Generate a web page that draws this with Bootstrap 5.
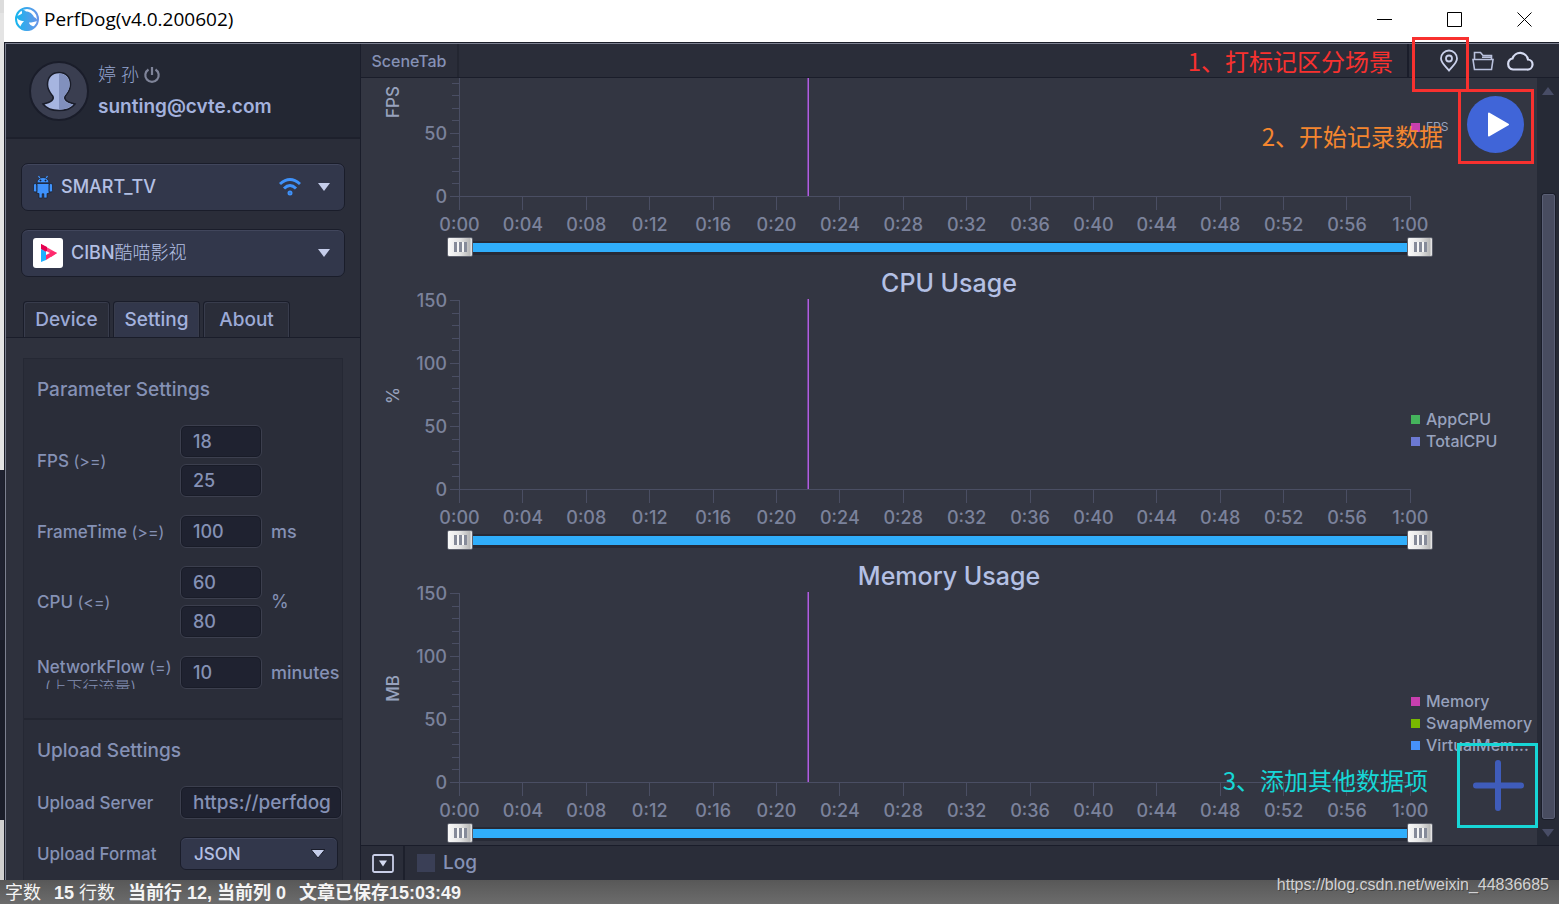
<!DOCTYPE html>
<html lang="zh-CN">
<head>
<meta charset="utf-8">
<meta name="viewport" content="width=device-width, initial-scale=1">
<title>PerfDog(v4.0.200602)</title>
<link href="https://cdn.jsdelivr.net/npm/bootstrap@5.3.0/dist/css/bootstrap.min.css" rel="stylesheet">
<style>
  :root {
    --ink: #1a1d2a;
    --bar: #2a2d39;
    --pane: #2e313d;
    --chart-bg: #333642;
    --raised: #32374b;
    --text: #8591b5;
    --bright: #b4c0e4;
    --axis: #4a4e63;
  }
  body { font-family: Inter, "Noto Sans CJK SC", sans-serif; font-size: 18px; line-height: 24px; font-weight: 500; color: var(--text); background: #666; }
  button { font-weight: inherit; }
  svg { display: block; flex: none; }
  .shrinkable { min-width: 0; min-height: 0; }
  .backdrop-edge { width: 4px; background: linear-gradient(#dcdcdc 0 13px, #e4e4e4 13px 470px, #1f2230 470px 640px, #1a1d29 640px 820px, #d0d0d0 820px); }
  .title-bar { height: 42px; background: #fff; color: #000; font: 400 19px/24px "Open Sans", sans-serif; }
  .title-bar .caption-btn { width: 70px; height: 40px; }
  .plain-btn { background: none; border: 0; padding: 0; color: inherit; display: flex; align-items: center; justify-content: center; }
  .app-frame { border-left: 1px solid #1b1e29; border-top: 1px solid #1b1e29; }
  .app-inner { border-left: 1px solid #7c8090; border-top: 1px solid #7c8090; }

  .side { width: 355px; background: var(--bar); border-right: 1px solid var(--ink); }
  .account { height: 95px; background: #232733; border-bottom: 2px solid #1d202c; padding-left: 22px; }
  .account-name { font-weight: 300; font-size: 18px; color: #94a4cf; }
  .account-mail { font-weight: 600; font-size: 19px; color: #a4b2de; }
  .picker-list { display: grid; gap: 18px; padding: 24px 15px 0; }
  .picker { height: 48px; border: 1px solid var(--ink); border-radius: 7px; background: var(--raised); box-shadow: inset 0 1px #41465c; color: var(--bright); width: 100%; text-align: left; padding: 0 14px 0 11px; }
  .picker .cjk { font-weight: 300; }
  .side-tabs { --bs-nav-tabs-border-width: 0; gap: 3px; padding: 0 17px; border-bottom: 1px solid var(--ink); }
  .side-tabs .nav-link { width: 87px; height: 36px; padding: 0; margin: 0; font-size: 19px; color: #9caad6; border: 1px solid var(--ink); border-bottom: 0; border-radius: 4px 4px 0 0; box-shadow: inset 1px 1px #383c4c, inset -1px 0 #383c4c; }
  .side-tabs .nav-link:hover { color: var(--bright); }
  .side-tabs .nav-link.active { background: var(--raised); color: #a4b2de; border-color: var(--ink); }
  .tab-body { background: var(--pane); min-height: 0; padding: 20px 17px 0; }
  .panel-box { background: var(--bar); border: 1px solid #252834; border-bottom: 0; }
  .set-group { padding: 19px 0 0 13px; }
  .set-group + .set-group { border-top: 2px solid #232631; }
  .set-group:first-child { padding-bottom: 29px; }
  .set-title { font-size: 19px; line-height: 24px; font-weight: 500; margin-bottom: 23px; }
  .set-rows { display: grid; grid-template-columns: 143px 82px 1fr; row-gap: 18px; align-items: center; }
  .set-rows .pair { display: grid; gap: 6px; }
  .set-rows label { font-size: 17px; white-space: nowrap; }
  .set-rows label span { font-size: 16px; font-weight: 400; }
  .set-rows .unit { padding-left: 9px; white-space: nowrap; font-size: 18px; }
  .set-rows .clip-label { height: 33px; line-height: 22px; overflow: hidden; }
  .set-rows .clip-label .sub { display: block; padding-left: 8px; line-height: 18px; font-size: 16px; font-weight: 300; }
  .field { height: 33px; min-width: 0; padding: 0 8px 0 12px; border: 1px solid #3c3f4e; border-radius: 6px; background: #1f2230; color: var(--text); font-size: 18px; font-weight: 500; box-shadow: inset 0 0 0 1px #191c28; }
  .field:focus { background: #1f2230; color: var(--bright); }
  .wide { grid-column: 2 / 4; }
  .server-field { font-size: 19px; padding-right: 0; }
  .format-list { width: 158px; height: 33px; padding: 0 30px 0 13px; border: 1px solid var(--ink); border-radius: 6px; font-size: 17px; font-weight: 500; line-height: 30px; color: var(--bright); background: var(--raised) url("data:image/svg+xml,%3Csvg xmlns='http://www.w3.org/2000/svg' viewBox='0 0 14 9'%3E%3Cpath d='M0 .5h14L7 9z' fill='%23c5cdea' stroke='%231a1d2a'/%3E%3C/svg%3E") no-repeat right 12px center / 14px 9px; box-shadow: inset 0 1px #41465c; }

  .main-pane { min-width: 0; background: var(--chart-bg); }
  .scene-bar { height: 34px; background: var(--bar); border-bottom: 1px solid var(--ink); }
  .scene-tab { width: 98px; font-size: 16px; border-right: 2px solid #232631; }
  .scene-note { padding-right: 14px; padding-top: 1px; }
  .scene-tools { width: 152px; border-left: 2px solid var(--ink); padding-right: 25px; }
  .note { font: 400 24px/32px "Noto Sans CJK SC", sans-serif; white-space: nowrap; }
  .note-red { color: #f8312f; } .note-orange { color: #f5862f; } .note-cyan { color: #17d6d6; }
  .mark-frame { position: absolute; border: 3px solid currentColor; pointer-events: none; }
  .frame-pin { width: 57px; height: 55px; right: 90px; top: -7px; }
  .run-slot { position: absolute; right: 25px; top: 45px; width: 76px; height: 75px; border: 3px solid #f8312f; }
  .run-btn { width: 57px; height: 57px; border-radius: 50%; background: #4065d8; margin: 4px 0 0 6px; }
  .add-slot { position: absolute; right: 21px; bottom: 52px; width: 81px; height: 85px; border: 3px solid #17d6d6; }
  .note-run { position: absolute; right: 116px; top: 76px; }
  .note-add { position: absolute; right: 131px; bottom: 84px; }

  .chart-list { min-height: 0; display: flex; flex-direction: column; justify-content: flex-end; overflow: hidden; }
  .chart-block { height: 293px; flex: none; display: flex; flex-direction: column; }
  .chart-name { height: 41px; padding-top: 6px; font-size: 25px; line-height: 36px; font-weight: 500; color: var(--bright); text-align: center; margin: 0; }
  .y-side { width: 98px; height: 190px; display: grid; grid-template-columns: 64px 34px; }
  .y-title { writing-mode: vertical-rl; transform: rotate(180deg); place-self: center; font-size: 17px; color: #98a2bd; }
  .y-scale { display: flex; flex-direction: column; justify-content: space-between; align-items: flex-end; }
  .y-scale i { display: block; height: 1px; width: 7px; background: var(--axis); position: relative; }
  .y-scale i.major { width: 9px; }
  .y-scale i span { position: absolute; right: 12px; top: -11px; font-style: normal; font-size: 18px; line-height: 24px; color: #7b829b; }
  .plot { height: 190px; border-left: 1px solid var(--axis); border-bottom: 1px solid var(--axis); position: relative; }
  .cursor-line { position: absolute; top: -1px; bottom: 0; width: 2px; margin-left: -2px; background: linear-gradient(90deg, #74429a 50%, #b060dd 50%); }
  .x-scale { display: flex; justify-content: space-between; height: 40px; }
  .x-scale div { width: 1px; display: flex; flex-direction: column; align-items: center; font-size: 18px; line-height: 24px; white-space: nowrap; color: #7b829b; }
  .x-scale div::before { content: ""; width: 1px; height: 13px; margin-bottom: 3px; background: var(--axis); flex: none; }
  .window-range { display: grid; height: 20px; margin: 0 -22px 0 -12px; background: linear-gradient(#272a36, #272a36) 0 4px / 100% 14px no-repeat; background-clip: content-box; padding: 0 12px; }
  .window-range input { grid-area: 1 / 1; appearance: none; background: none; width: auto; margin: 0 -12px; height: 20px; pointer-events: none; min-width: 0; }
  .window-range .lo { background: linear-gradient(#30aefb, #30aefb) 12px 6px / calc(100% - 24px) 9px no-repeat; }
  .window-range input::-webkit-slider-thumb { appearance: none; pointer-events: auto; width: 26px; height: 20px; border: 1px solid #5d606c; border-radius: 2px;
    background: linear-gradient(90deg, #858a99 3px, #f6f6f6 3px 5px, #858a99 5px 8px, #f6f6f6 8px 10px, #858a99 10px 13px) center / 13px 10px no-repeat, linear-gradient(90deg, #fafafa, #e4e4e4 50%, #b9b9b9 90%, #eee); }
  .key-side { width: 126px; padding-top: 8px; display: flex; flex-direction: column; justify-content: center; font-size: 16px; line-height: 22px; color: #98a2bd; white-space: nowrap; }
  .key-side.tight { font-size: 12px; padding: 0 0 12px; font-weight: 400; }
  .key-side div { display: flex; align-items: center; gap: 6px; }
  .key-side b { width: 9px; height: 9px; flex: none; }
  .scroll-rail { width: 22px; background: #262a36; padding: 9px 0 8px; }
  .scroll-rail .grip { width: 13px; margin: 99px 0 10px; border: 1px solid #5a5f75; outline: 1px solid var(--ink); border-radius: 2px; background: #484c60; }
  .log-bar { height: 35px; background: var(--bar); border-top: 1px solid var(--ink); font-size: 19px; }
  .log-toggle { width: 44px; border-right: 2px solid #1d202c; padding-left: 2px; }
  .log-check { appearance: none; width: 18px; height: 18px; margin: 0; background: #3a3f56; }
  .log-check:checked { background: #4065d8; }

  .editor-status { height: 24px; background: linear-gradient(#585858, #6c6c6c); color: #f4f4f4; font: 700 18px/26px "Liberation Sans", "Noto Sans CJK SC", sans-serif; padding-left: 5px; position: relative; display: flex; gap: 13px; }
  .editor-status .thin { font-weight: 400; }
  .page-mark { position: absolute; right: 10px; top: -7px; font: 400 16px/24px "Liberation Sans", sans-serif; color: #d2d2d4; text-decoration: none; text-shadow: 1px 1px #444; }
</style>
</head>
<body class="vh-100 d-flex flex-column overflow-hidden">
<div class="d-flex flex-grow-1 shrinkable">
  <div class="backdrop-edge flex-shrink-0"></div>
  <div class="d-flex flex-column flex-grow-1 shrinkable">
    <header class="title-bar d-flex align-items-center flex-shrink-0 pb-1">
      <svg class="ms-2 me-1" width="28" height="28" viewBox="0 0 28 28"><defs><linearGradient id="lg" x1="0" x2="1"><stop stop-color="#18b5ee"/><stop offset="1" stop-color="#6795e8"/></linearGradient></defs><circle cx="15" cy="14" r="11" fill="#fff" stroke="url(#lg)" stroke-width="2"/><path d="M4 11C5 14 8 16 12 16 9 19 8 22 8 23.500 13 27 19 26 23 22 19 21 17 19 17 17.500 20 17.500 23 17 25.500 15.500 25 14 24 13 22 12 20 8 17 6.500 14 6.500 13 5 11 4.500 9 4.800 10 6 10 7 10 8.500 8 10 6 11 4 11Z" fill="url(#lg)"/></svg>
      <span class="flex-grow-1">PerfDog(v4.0.200602)</span>
      <button class="plain-btn caption-btn" aria-label="Minimize"><svg width="16" height="16" viewBox="0 0 16 16"><path d="M1 8.500h15" stroke="#000"/></svg></button>
      <button class="plain-btn caption-btn" aria-label="Maximize"><svg width="16" height="16" viewBox="0 0 16 16"><path d="M1.500 1.500h14v14h-14z" fill="none" stroke="#000"/></svg></button>
      <button class="plain-btn caption-btn" aria-label="Close"><svg width="16" height="16" viewBox="0 0 16 16"><path d="M1.500 1.500l14 14M15.500 1.500l-14 14" stroke="#000"/></svg></button>
    </header>

    <div class="app-frame d-flex flex-grow-1 shrinkable">
    <div class="app-inner d-flex flex-grow-1 shrinkable">
      <aside class="side d-flex flex-column flex-shrink-0 overflow-hidden">
        <section class="account d-flex align-items-center flex-shrink-0">
          <svg width="62" height="62" viewBox="0 0 62 62"><circle cx="31" cy="31" r="29" fill="#3a3e50" stroke="#1a1d2a" stroke-width="2"/><path d="M31 12.500c-7 0-11.500 4.500-11.500 12 0 6 3.500 9 5.500 12 1 3-1 5.500-10 7.500 3 4 9 6.500 16 6.500s13-2.500 16-6.500c-9-2-11-4.500-10-7.500 2-3 5.500-6 5.500-12 0-7.500-4.500-12-11.500-12z" fill="#a6b5e0" stroke="#1a1d2a" stroke-width="1.500"/><path d="M31 13.500c6 0 10.500 4 10.500 11 0 6-3.500 9-5.500 12-1 3.500 1 6 9 8-3 3-8 5-14 5z" fill="#8190bd"/></svg>
          <div class="ms-2">
            <div class="account-name d-flex align-items-center mb-2">婷 孙
              <button class="plain-btn ms-1" aria-label="Sign out"><svg width="18" height="18" viewBox="0 0 18 18" fill="none" stroke="#7f8499" stroke-width="2.200"><path d="M5.500 3.500a6.700 6.700 0 1 0 7 0M9 1v8"/></svg></button>
            </div>
            <div class="account-mail">sunting@cvte.com</div>
          </div>
        </section>

        <div class="picker-list">
          <button class="picker d-flex align-items-center">
            <svg width="20" height="24" viewBox="0 0 20 24" fill="#3f92fb" stroke="#1a1d2a" stroke-width=".7"><path d="M5.500 1l2 3M14.500 1l-2 3" stroke="#3f92fb" stroke-width="1.300"/><path d="M4 8.500h12v10h-2V23h-3.200v-4.200H9.200V23H6v-4.500H4zM4 7.800a6 5.300 0 0 1 12 0z"/><rect x=".5" y="8.500" width="3.200" height="8.500" rx="1.500"/><rect x="16.300" y="8.500" width="3.200" height="8.500" rx="1.500"/><circle cx="7.500" cy="5.500" r=".6" fill="#1a1d2a"/><circle cx="12.500" cy="5.500" r=".6" fill="#1a1d2a"/></svg>
            <span class="flex-grow-1 ps-2">SMART_TV</span>
            <svg class="me-3" width="24" height="22" viewBox="0 0 24 22" fill="none" stroke="#3f92fb" stroke-width="3"><path d="M2 8q10-9 20 0M6 12.500q6-6 12 0"/><circle cx="12" cy="17" r="1" /></svg>
            <svg width="12" height="8" viewBox="0 0 12 8"><path d="M0 0h12L6 8z" fill="#c5cdea"/></svg>
          </button>
          <button class="picker d-flex align-items-center">
            <svg width="30" height="30" viewBox="0 0 30 30"><rect width="30" height="30" rx="3" fill="#fff"/><path d="M8 6l16 9-6 4-10-8z" fill="#ff3f7c"/><path d="M8 6l6 3v5l-6-3z" fill="#e5004f"/><path d="M8 11l5 3v8l-5 2z" fill="#1fb0ff"/><path d="M24 15l-11 7v-6l6-3z" fill="#ff2a6d"/><path d="M13 13l4 2-4 2z" fill="#fff"/></svg>
            <span class="flex-grow-1 ps-2">CIBN<span class="cjk">酷喵影视</span></span>
            <svg width="12" height="8" viewBox="0 0 12 8"><path d="M0 0h12L6 8z" fill="#c5cdea"/></svg>
          </button>
        </div>

        <ul class="nav nav-tabs side-tabs mt-4 flex-nowrap flex-shrink-0" role="tablist">
          <li class="nav-item"><button class="nav-link" role="tab">Device</button></li>
          <li class="nav-item"><button class="nav-link active" role="tab" aria-selected="true">Setting</button></li>
          <li class="nav-item"><button class="nav-link" role="tab">About</button></li>
        </ul>

        <div class="tab-body flex-grow-1 d-flex flex-column">
          <form class="panel-box flex-grow-1">
            <section class="set-group">
              <h2 class="set-title">Parameter Settings</h2>
              <div class="set-rows">
                <label for="fps1">FPS <span>(&gt;=)</span></label>
                <div class="pair"><input class="form-control field" id="fps1" value="18"><input class="form-control field" aria-label="FPS upper" value="25"></div>
                <span></span>
                <label for="ft">FrameTime <span>(&gt;=)</span></label>
                <input class="form-control field" id="ft" value="100"><span class="unit">ms</span>
                <label for="cpu1">CPU <span>(&lt;=)</span></label>
                <div class="pair"><input class="form-control field" id="cpu1" value="60"><input class="form-control field" aria-label="CPU upper" value="80"></div>
                <span class="unit fw-normal">%</span>
                <label class="clip-label" for="net">NetworkFlow <span>(=)</span><span class="sub">(上下行流量)</span></label>
                <input class="form-control field" id="net" value="10"><span class="unit">minutes</span>
              </div>
            </section>
            <section class="set-group">
              <h2 class="set-title">Upload Settings</h2>
              <div class="set-rows">
                <label for="srv">Upload Server</label>
                <input class="form-control field server-field wide" id="srv" value="https://perfdog">
                <label for="fmt">Upload Format</label>
                <select class="form-select format-list wide" id="fmt"><option>JSON</option></select>
              </div>
            </section>
          </form>
        </div>
      </aside>

      <main class="main-pane d-flex flex-column flex-grow-1 position-relative">
        <div class="scene-bar d-flex flex-shrink-0">
          <button class="plain-btn scene-tab">SceneTab</button>
          <span class="note note-red scene-note ms-auto">1、打标记区分场景</span>
          <div class="scene-tools d-flex align-items-center justify-content-end">
            <button class="plain-btn" aria-label="Add mark"><svg width="22" height="24" viewBox="0 0 22 24" fill="none" stroke="#c9d0ea" stroke-width="1.800"><path d="M11 21.500C8 17.500 3 14 3 9.500a8 8 0 0 1 16 0c0 4.500-5 8-8 12z"/><circle cx="11" cy="9.500" r="3"/></svg></button>
            <button class="plain-btn ms-2 ps-1" aria-label="Open folder"><svg width="22" height="22" viewBox="0 0 22 22" fill="none" stroke="#b9c1dd" stroke-width="1.600"><path d="M2.500 9V2.500h6l2.500 3h8.500V9M10 7.300h9M1 9.500h20l-1.500 10h-17z"/></svg></button>
            <button class="plain-btn ms-2 ps-1" aria-label="Cloud"><svg width="28" height="22" viewBox="0 0 28 22" fill="none" stroke="#d5dbf1" stroke-width="2.200"><path d="M7 19.500h14a5 5 0 0 0 1-10 8 8 0 0 0-15.500-1A5.600 5.600 0 0 0 7 19.500z"/></svg></button>
          </div>
        </div>
        <div class="d-flex flex-grow-1 shrinkable">
          <div class="chart-list flex-grow-1" id="charts"></div>
          <div class="scroll-rail d-flex flex-column align-items-center">
            <svg width="12" height="8" viewBox="0 0 12 8"><path d="M0 8h12L6 0z" fill="#484d66"/></svg>
            <div class="grip flex-grow-1"></div>
            <svg width="12" height="8" viewBox="0 0 12 8"><path d="M0 0h12L6 8z" fill="#484d66"/></svg>
          </div>
        </div>
        <div class="log-bar d-flex align-items-stretch flex-shrink-0">
          <button class="plain-btn log-toggle" aria-label="Toggle log"><svg width="22" height="19" viewBox="0 0 22 19"><rect x="1" y="1" width="20" height="17" rx="1.500" fill="none" stroke="#c9cfe8" stroke-width="1.800"/><path d="M7 6.500h8l-4 6z" fill="#d5dbf1"/></svg></button>
          <div class="d-flex align-items-center ps-2 ms-1">
            <input class="log-check" type="checkbox" id="log"><label class="ps-1 ms-1" for="log">Log</label>
          </div>
        </div>

        <div class="mark-frame frame-pin note-red"></div>
        <span class="note note-orange note-run">2、开始记录数据</span>
        <div class="run-slot"><button class="plain-btn run-btn" aria-label="Start recording"><svg width="57" height="57" viewBox="0 0 57 57"><path d="M22 17.500l19 11-19 11z" fill="#fff" stroke="#fff" stroke-width="2" stroke-linejoin="round"/></svg></button></div>
        <span class="note note-cyan note-add">3、添加其他数据项</span>
        <div class="add-slot d-flex justify-content-center"><button class="plain-btn" aria-label="Add data item"><svg width="52" height="52" viewBox="0 0 52 52"><path d="M26 3v45M4 25.500h45" stroke="#3f5cba" stroke-width="6" stroke-linecap="round"/></svg></button></div>
      </main>
    </div>
    </div>
  </div>
</div>
<footer class="editor-status flex-shrink-0"><span class="thin">字数</span><span>15 <span class="thin">行数</span></span><span>当前行 12, 当前列 0</span><span>文章已保存15:03:49</span><a class="page-mark" href="https://blog.csdn.net/weixin_44836685">https://blog.csdn.net/weixin_44836685</a></footer>

<script src="https://cdn.jsdelivr.net/npm/bootstrap@5.3.0/dist/js/bootstrap.bundle.min.js"></script>
<script>
  const cursorSecond = 22, spanSeconds = 60;
  // maxLabel: highest value labelled while the list is scrolled to its end
  const charts = [
    { name: '', unit: 'FPS', tight: true, maxLabel: 50, keys: [['FPS', '#c83fae']] },
    { name: 'CPU Usage', unit: '%', maxLabel: 150, keys: [['AppCPU', '#45b35c'], ['TotalCPU', '#6c79d3']] },
    { name: 'Memory Usage', unit: 'MB', maxLabel: 150, keys: [['Memory', '#c83fae'], ['SwapMemory', '#79b800'], ['VirtualMem...', '#4691fa']] }
  ];
  const yTicks = max => Array.from({ length: 16 }, (_, i) => {
    const v = 150 - i * 10;
    return i % 5 ? '<i></i>' : `<i class="major">${v <= max ? `<span>${v}</span>` : ''}</i>`;
  }).join('');
  const xTicks = Array.from({ length: 16 }, (_, i) => {
    const s = i * 4;
    return `<div>${Math.floor(s / 60)}:${String(s % 60).padStart(2, '0')}</div>`;
  }).join('');
  document.getElementById('charts').innerHTML = charts.map(c => `
    <section class="chart-block">
      <h2 class="chart-name">${c.name}</h2>
      <div class="d-flex flex-grow-1">
        <div class="y-side"><span class="y-title">${c.unit}</span><div class="y-scale">${yTicks(c.maxLabel)}</div></div>
        <div class="flex-grow-1">
          <div class="plot"><div class="cursor-line" style="left:${cursorSecond / spanSeconds * 100}%"></div></div>
          <div class="x-scale">${xTicks}</div>
          <div class="window-range">
            <input class="lo" type="range" aria-label="${c.unit} start" value="0">
            <input class="hi" type="range" aria-label="${c.unit} end" value="100">
          </div>
        </div>
        <div class="key-side${c.tight ? ' tight' : ''}">${c.keys.map(k => `<div><b style="background:${k[1]}"></b>${k[0]}</div>`).join('')}</div>
      </div>
    </section>`).join('');
</script>
</body>
</html>
